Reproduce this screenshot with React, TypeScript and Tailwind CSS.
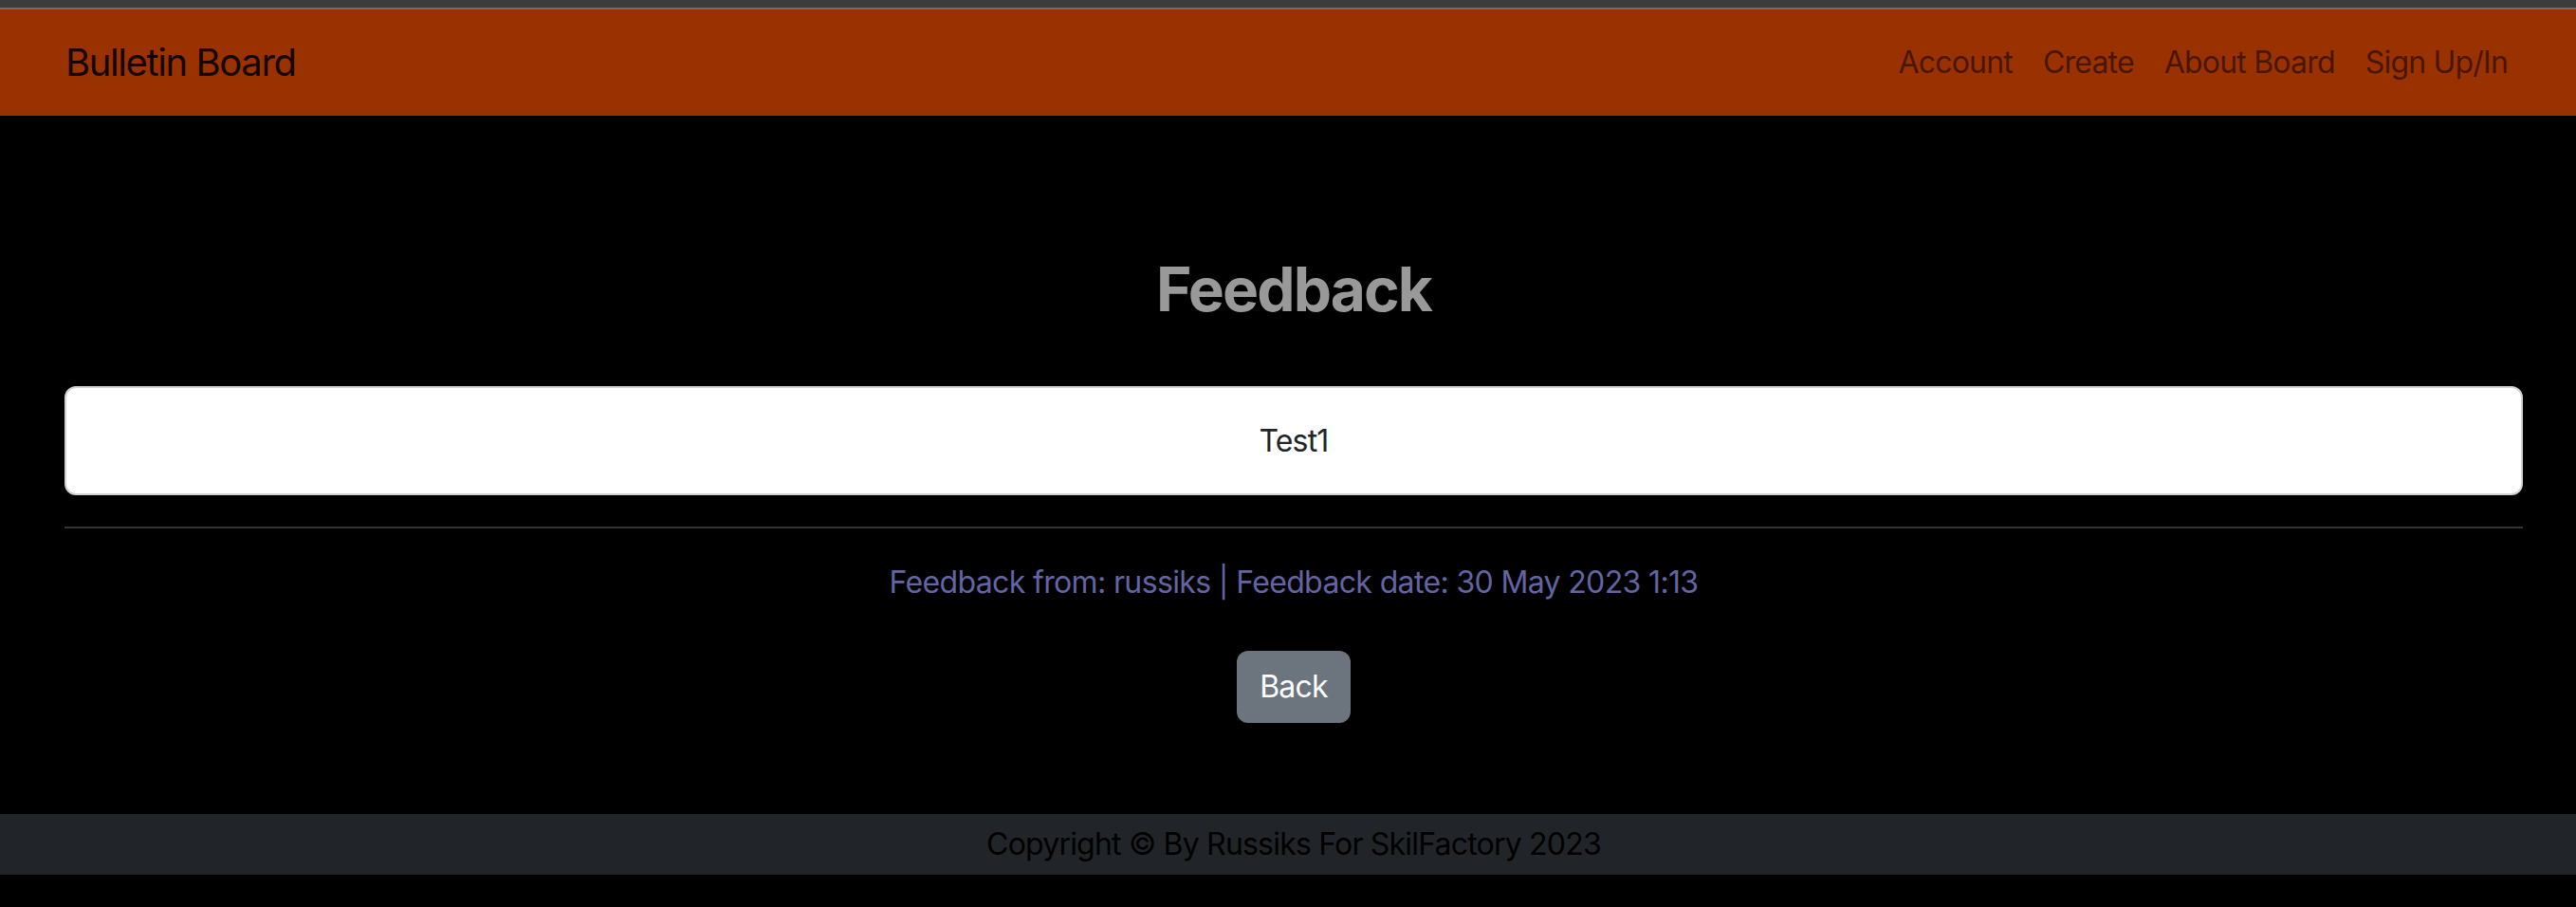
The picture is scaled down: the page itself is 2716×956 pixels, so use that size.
export default function App() {
  const links = ["Account", "Create", "About Board", "Sign Up/In"];

  return (
    <div className="min-h-screen bg-black text-[32px] tracking-[-0.025em] font-['Inter',sans-serif]">
      <div className="h-[8px] bg-[#3c3c3c]" />
      <div className="h-[2px] bg-[#6e6e6e]" />

      <nav className="h-[112px] bg-[#9a3100] flex items-center justify-between pl-[69px] pr-[56px]">
        <span className="text-[40px] tracking-[-0.035em] text-black/90">Bulletin Board</span>
        <ul className="flex">
          {links.map((l) => (
            <li key={l} className="px-[16px] text-black/55">
              {l}
            </li>
          ))}
        </ul>
      </nav>

      <main className="ml-[68px] mr-[56px] flex flex-col items-center">
        <h2 className="mt-[144px] text-[64px] leading-[77px] tracking-[-0.03em] font-bold text-[#999999]">
          Feedback
        </h2>

        <div className="mt-[64px] w-full h-[115px] bg-white border-2 border-[#d2d2d2] rounded-[12px] flex items-center justify-center text-[#212529]">
          Test1
        </div>

        <hr className="mt-[33px] w-full border-0 h-[2px] bg-[#333333]" />

        <p className="mt-[33px] leading-[48px] tracking-[-0.02em] text-[#6464a3]">
          Feedback from: russiks | Feedback date: 30 May 2023 1:13
        </p>

        <button className="mt-[48px] h-[76px] px-[24px] rounded-[12px] bg-[#6c757d] text-white">
          Back
        </button>
      </main>

      <footer className="mt-[96px] h-[64px] bg-[#212529] pl-[68px] pr-[56px] flex items-center justify-center text-black">
        Copyright © By Russiks For SkilFactory 2023
      </footer>
    </div>
  );
}
